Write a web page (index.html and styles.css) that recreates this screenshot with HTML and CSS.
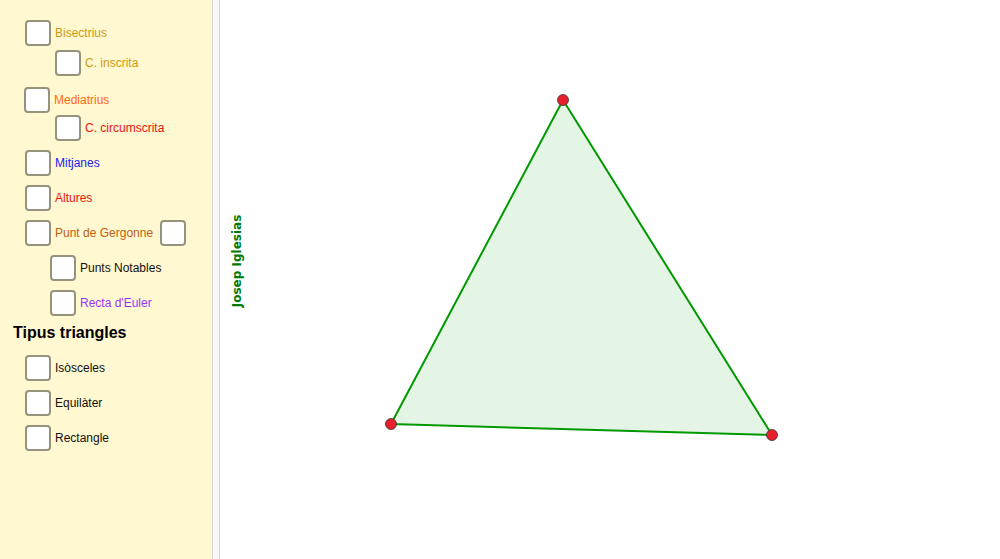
FILE: index.html
```html
<!DOCTYPE html>
<html>
<head>
<meta charset="utf-8">
<link rel="stylesheet" href="styles.css">
</head>
<body>
<div class="app">
  <div class="sidebar">
    <div class="row ind-25 first"><span class="cb"></span><span class="lbl c-bis">Bisectrius</span></div>
    <div class="row ind-55 m4"><span class="cb"></span><span class="lbl c-bis">C. inscrita</span></div>
    <div class="row ind-24 m11"><span class="cb"></span><span class="lbl c-med">Mediatrius</span></div>
    <div class="row ind-55 m2"><span class="cb"></span><span class="lbl c-red">C. circumscrita</span></div>
    <div class="row ind-25 m9"><span class="cb"></span><span class="lbl c-blue">Mitjanes</span></div>
    <div class="row ind-25 m9"><span class="cb"></span><span class="lbl c-red">Altures</span></div>
    <div class="row ind-25 m9"><span class="cb"></span><span class="lbl c-brown">Punt de Gergonne</span><span class="cb cb-after"></span></div>
    <div class="row ind-50 m9"><span class="cb"></span><span class="lbl c-black">Punts Notables</span></div>
    <div class="row ind-50 m9"><span class="cb"></span><span class="lbl c-purple">Recta d'Euler</span></div>
    <div class="title">Tipus triangles</div>
    <div class="row ind-25 m12"><span class="cb"></span><span class="lbl c-black">Isòsceles</span></div>
    <div class="row ind-25 m9"><span class="cb"></span><span class="lbl c-black">Equilàter</span></div>
    <div class="row ind-25 m9"><span class="cb"></span><span class="lbl c-black">Rectangle</span></div>
  </div>
  <div class="divider"></div>
  <div class="canvas">
    <svg class="board" viewBox="220 0 780 559" width="780" height="559">
      <polygon points="563,100 391,424 772,435" fill="rgba(0,153,0,0.1)" stroke="#009900" stroke-width="2" stroke-linejoin="round"/>
      <circle cx="563" cy="100" r="5.5" fill="#e8202e" stroke="#333" stroke-width="0.8"/>
      <circle cx="391" cy="424" r="5.5" fill="#e8202e" stroke="#333" stroke-width="0.8"/>
      <circle cx="772" cy="435" r="5.5" fill="#e8202e" stroke="#333" stroke-width="0.8"/>
      <text class="author" x="0" y="0" transform="translate(237,261) rotate(-90)" text-anchor="middle" dominant-baseline="central">Josep Iglesias</text>
    </svg>
  </div>
</div>
</body>
</html>
```
FILE: styles.css
```css
html, body {
  margin: 0;
  padding: 0;
  background: #ffffff;
}
.app {
  display: flex;
  width: 1000px;
  height: 559px;
  overflow: hidden;
  font-family: "Liberation Sans", Arial, sans-serif;
}
.sidebar {
  width: 212px;
  flex: none;
  background: #fff8d0;
  display: flex;
  flex-direction: column;
  padding-top: 20px;
  box-sizing: border-box;
}
.divider {
  width: 8px;
  flex: none;
  box-sizing: border-box;
  background: #f8f8f8;
  border-left: 1px solid #d4d4d4;
  border-right: 1px solid #d4d4d4;
}
.canvas {
  flex: 1;
  background: #ffffff;
}
.board {
  display: block;
}
.row {
  display: flex;
  align-items: center;
  height: 26px;
}
.ind-24 { padding-left: 24px; }
.ind-25 { padding-left: 25px; }
.ind-50 { padding-left: 50px; }
.ind-55 { padding-left: 55px; }
.m2 { margin-top: 2px; }
.m4 { margin-top: 4px; }
.m9 { margin-top: 9px; }
.m11 { margin-top: 11px; }
.m12 { margin-top: 12px; }
.cb {
  width: 26px;
  height: 26px;
  box-sizing: border-box;
  border: 2px solid #96937c;
  border-radius: 4px;
  background: #ffffff;
  flex: none;
}
.cb-after {
  margin-left: 7px;
}
.lbl {
  font-size: 12px;
  margin-left: 4px;
  white-space: nowrap;
}
.c-bis { color: #cc9a14; }
.c-med { color: #ff6a10; }
.c-red { color: #ee1111; }
.c-blue { color: #2222ee; }
.c-brown { color: #c15f10; }
.c-black { color: #111111; }
.c-purple { color: #9933ff; }
.title {
  margin-top: 7px;
  padding-left: 13px;
  height: 20px;
  line-height: 20px;
  font-size: 16px;
  font-weight: bold;
  color: #000000;
}
.author {
  font-family: "DejaVu Sans", sans-serif;
  font-weight: bold;
  font-size: 12px;
  fill: #007a00;
}
```
